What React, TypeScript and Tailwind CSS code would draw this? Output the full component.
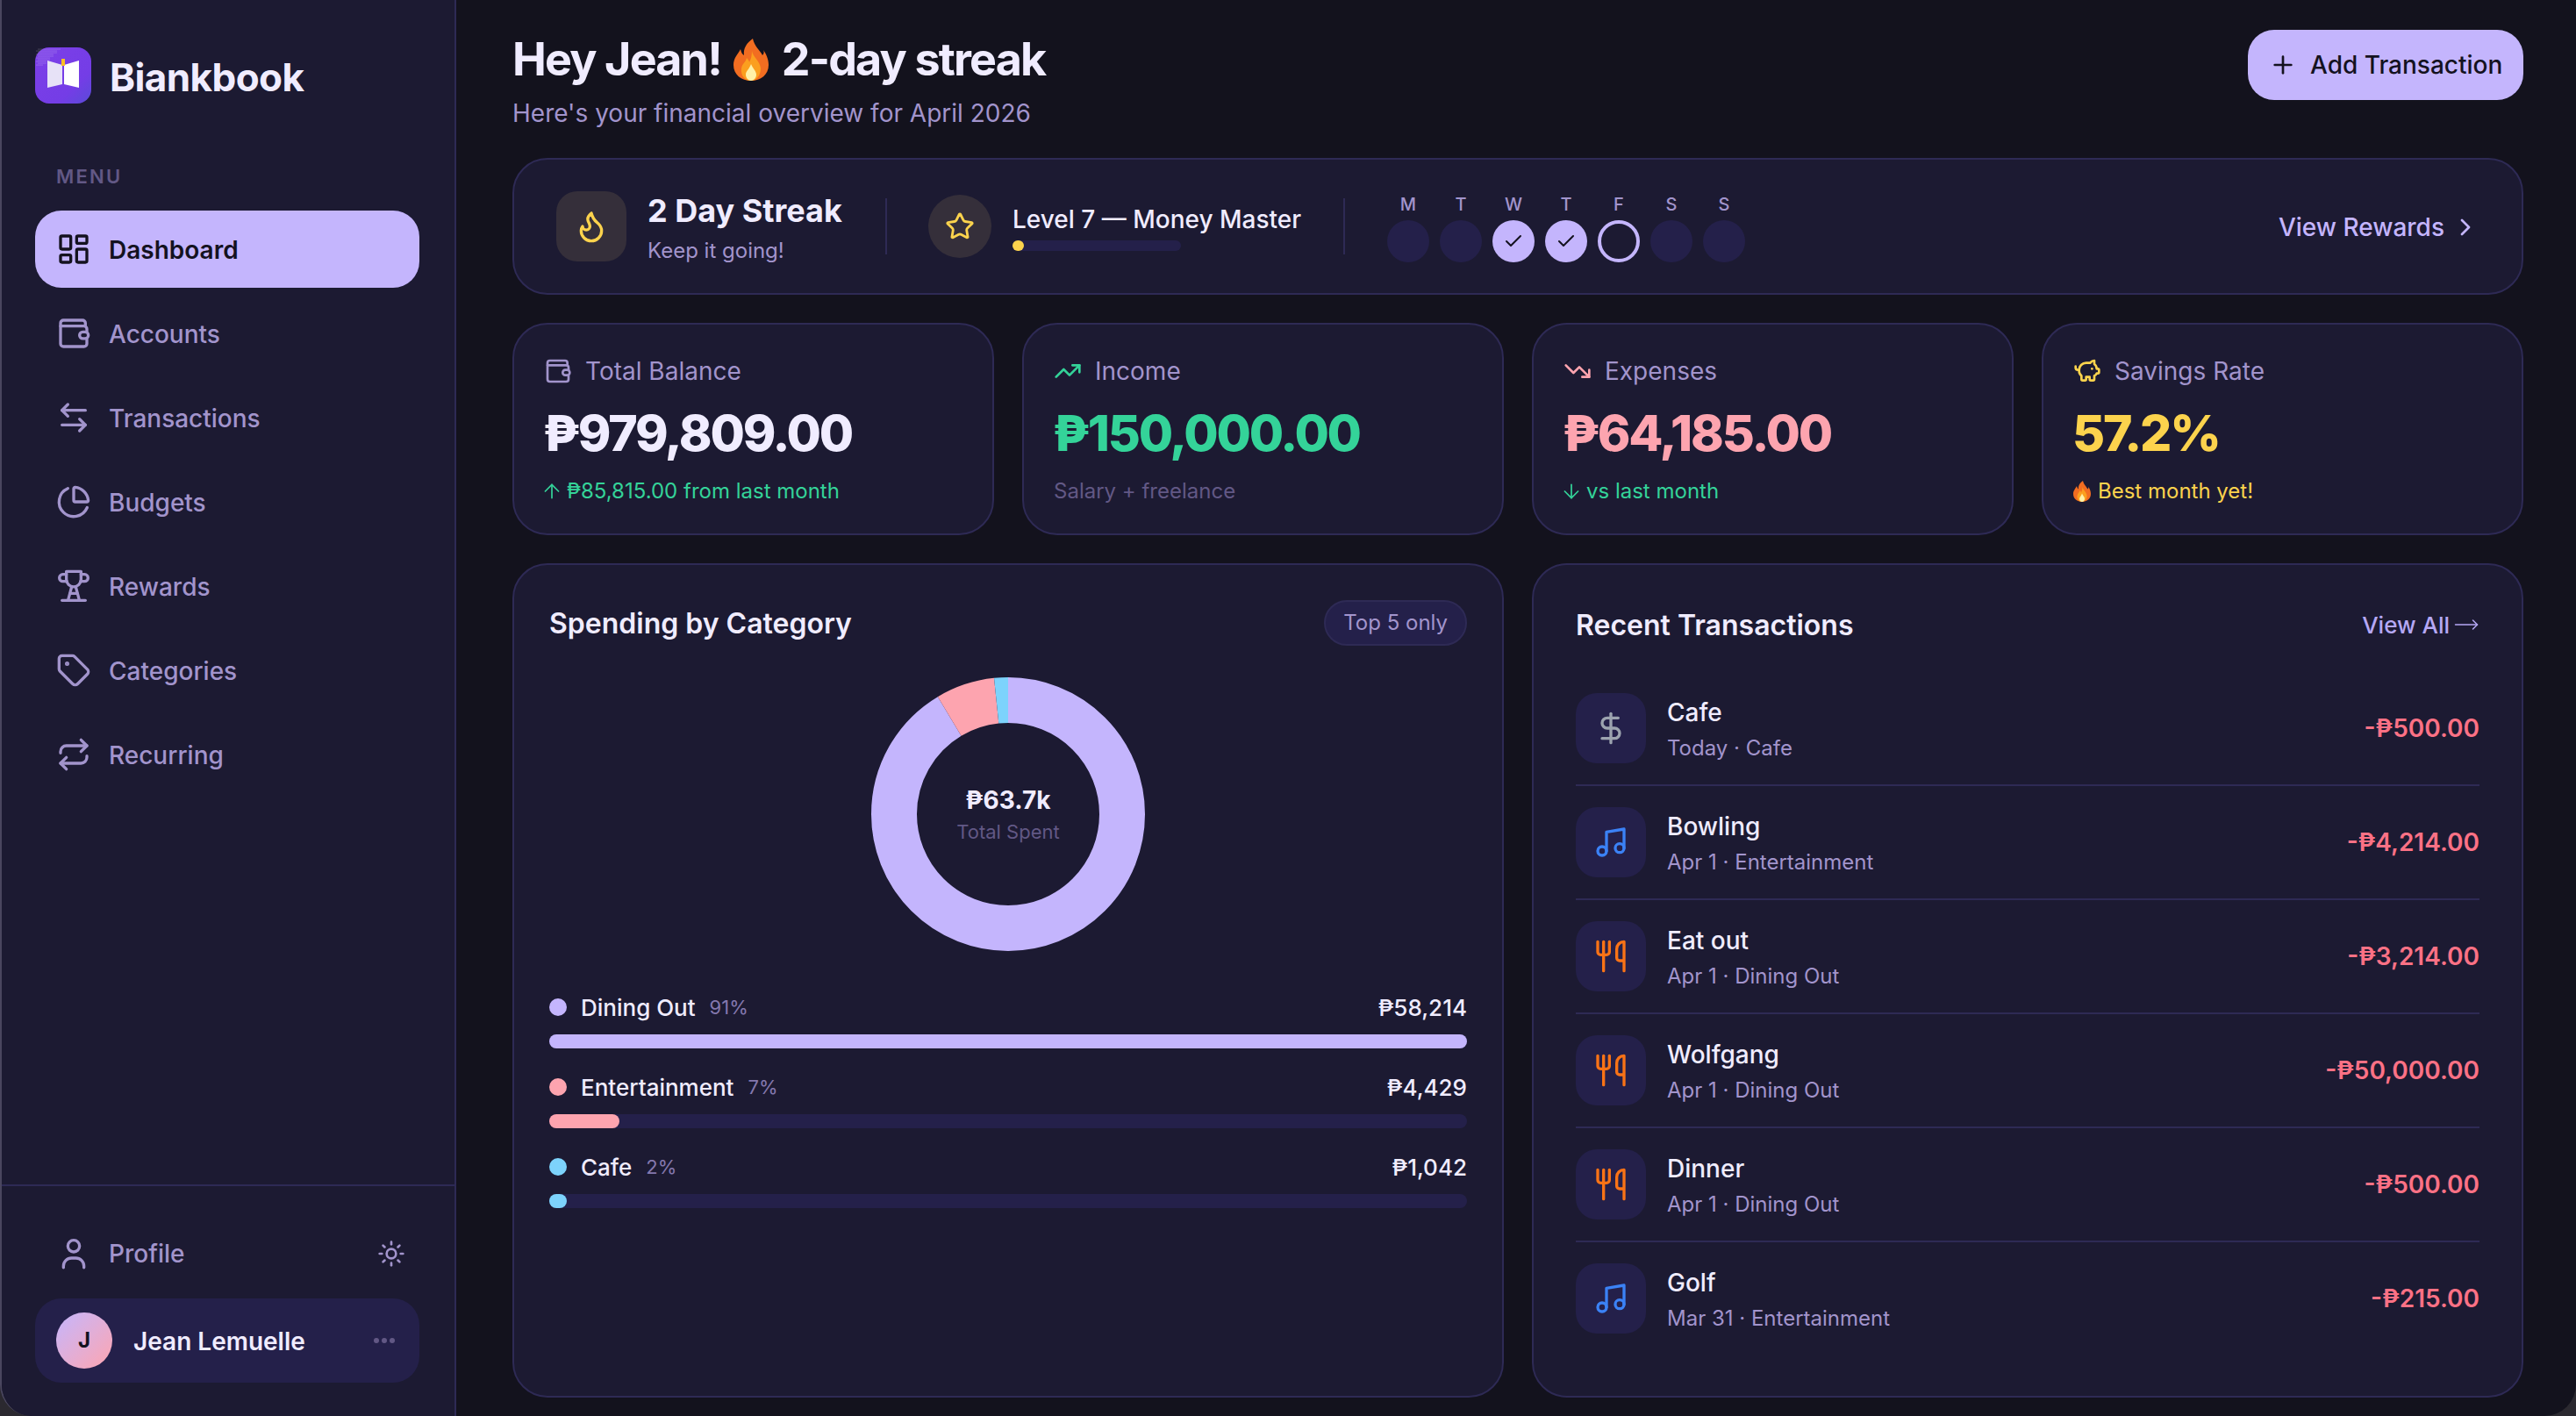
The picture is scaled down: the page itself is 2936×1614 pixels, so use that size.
import {
  ArrowDown,
  ArrowLeftRight,
  ArrowUp,
  Check,
  ChartPie,
  ChevronRight,
  DollarSign,
  Flame,
  LayoutDashboard,
  MoveRight,
  Music,
  PiggyBank,
  Plus,
  Repeat,
  Star,
  Sun,
  Tag,
  TrendingDown,
  TrendingUp,
  Utensils,
} from 'lucide-react'

type IconProps = { size?: number; className?: string; strokeWidth?: number }

function WalletIcon({ size = 40, className, strokeWidth = 2 }: IconProps) {
  return (
    <svg className={className} width={size} height={size} viewBox="0 0 24 24" fill="none" stroke="currentColor" strokeWidth={strokeWidth} strokeLinecap="round" strokeLinejoin="round">
      <path d="M20 7V5a2 2 0 0 0-2-2H5a2 2 0 0 0-2 2v14a2 2 0 0 0 2 2h14a2 2 0 0 0 2-2v-3" />
      <path d="M3 7h16a2 2 0 0 1 2 2v2" />
      <rect x="16" y="11" width="6" height="4.5" rx="2.2" />
    </svg>
  )
}

function TrophyIcon({ size = 40, className, strokeWidth = 2 }: IconProps) {
  return (
    <svg className={className} width={size} height={size} viewBox="0 0 24 24" fill="none" stroke="currentColor" strokeWidth={strokeWidth} strokeLinecap="round" strokeLinejoin="round">
      <path d="M7 2h10v5.500a5 5 0 0 1-10 0z" />
      <path d="M7 4H4.600a2.300 2.300 0 0 0 0 4.800H7.300" />
      <path d="M17 4h2.400a2.300 2.300 0 0 1 0 4.800h-2.700" />
      <path d="M10.600 12.500 8.200 21.500" />
      <path d="M13.400 12.500l2.400 9" />
      <path d="M9.600 17h4.800" />
      <path d="M4 21.800h16" />
    </svg>
  )
}

function UserIcon({ size = 40, className, strokeWidth = 2 }: IconProps) {
  return (
    <svg className={className} width={size} height={size} viewBox="0 0 24 24" fill="none" stroke="currentColor" strokeWidth={strokeWidth} strokeLinecap="round" strokeLinejoin="round">
      <circle cx="12" cy="6.800" r="4" />
      <path d="M5 21.500v-1a5.500 5.500 0 0 1 5.500-5.500h3a5.500 5.500 0 0 1 5.500 5.500v1" />
    </svg>
  )
}

function FireEmoji({ className }: { className: string }) {
  return (
    <svg className={className} viewBox="0 0 40 48">
      <path fill="#f26d21" d="M22 0C24 9 30 13 33 19C35 17 35 15 34 13C39 20 40 26 40 30C40 41 31 48 20 48C9 48 0 41 0 30C0 22 5 18 8 12C9 16 10 18 12 19C11 11 15 5 22 0Z" />
      <path fill="#fb9f1f" d="M21 14C22 21 30 25 31 34C31 42 26 48 20 48C13 48 8 42 9 34C10 28 14 27 15 22C17 24 18 26 18 27C20 23 21 19 21 14Z" />
      <path fill="#fff1a8" d="M20 29C22 34 26 37 26 41C26 45 23 48 20 48C17 48 14 45 14 41C14 37 18 35 20 29Z" />
    </svg>
  )
}

const logoDots: [number, number][] = []
for (let y = 2; y < 22; y += 2) {
  for (let x = 2; x < 30 - y; x += 2) logoDots.push([x + (y % 4), y])
}

function Logo() {
  return (
    <svg className="shrink-0" width="64" height="64" viewBox="0 0 64 64">
      <defs>
        <linearGradient id="logoBg" x1="0" y1="0" x2="1" y2="1">
          <stop offset="0" stopColor="#7d3fe8" />
          <stop offset="0.7" stopColor="#743de6" />
          <stop offset="1" stopColor="#5a4bd8" />
        </linearGradient>
      </defs>
      <rect width="64" height="64" rx="16" fill="url(#logoBg)" />
      {logoDots.map(([x, y]) => (
        <circle key={`${x}-${y}`} cx={x} cy={y} r="0.5" fill="#ffffff" opacity="0.5" />
      ))}
      <path fill="#e7e2f7" d="M14 15L31 20V42L14 46Z" />
      <path fill="#ffffff" d="M33 20L50 15V46L33 42Z" />
      <rect x="30" y="13" width="4" height="8" fill="#fbbf24" />
    </svg>
  )
}

const navItems = [
  { label: 'Dashboard', icon: LayoutDashboard, active: true },
  { label: 'Accounts', icon: WalletIcon },
  { label: 'Transactions', icon: ArrowLeftRight },
  { label: 'Budgets', icon: ChartPie },
  { label: 'Rewards', icon: TrophyIcon },
  { label: 'Categories', icon: Tag },
  { label: 'Recurring', icon: Repeat },
]

function Sidebar() {
  return (
    <aside className="flex w-[518px] shrink-0 flex-col border-r-2 border-[#2e2a55] bg-[#1c1a32]">
      <div className="flex items-center gap-[21px] pl-[38px] pt-[54px]">
        <Logo />
        <span className="translate-y-[2px] text-[44px] font-bold leading-[64px] tracking-[-0.6px] text-[#f0ecff]">Biankbook</span>
      </div>
      <p className="mt-[68px] pl-[62px] text-[22px] font-semibold leading-[30px] tracking-[2.2px] text-[#625885]">MENU</p>
      <nav className="mt-[24px] flex flex-col gap-[8px] pl-[38px] pr-[40px]">
        {navItems.map((item) => {
          const Icon = item.icon
          return (
            <div
              key={item.label}
              className={
                item.active
                  ? 'flex h-[88px] items-center gap-[20px] rounded-[30px] bg-[#c4b5fd] pl-[24px] text-[#14121f]'
                  : 'flex h-[88px] items-center gap-[20px] rounded-[30px] pl-[24px] text-[#a294cc]'
              }
            >
              <Icon size={40} strokeWidth={2} />
              <span className={item.active ? 'pt-[2px] text-[28px] font-semibold' : 'pt-[2px] text-[28px] font-medium'}>{item.label}</span>
            </div>
          )
        })}
      </nav>
      <div className="mt-auto border-t-2 border-[#2e2a55] pb-[38px] pl-[38px] pr-[40px] pt-[33px]">
        <div className="flex h-[88px] items-center gap-[20px] pl-[24px] pr-[16px] text-[#a294cc]">
          <UserIcon size={40} />
          <span className="text-[28px] font-medium">Profile</span>
          <Sun className="ml-auto" size={32} strokeWidth={2} />
        </div>
        <div className="mt-[7px] flex h-[96px] items-center rounded-[30px] bg-[#24204a] pl-[24px] pr-[28px]">
          <div className="flex h-[64px] w-[64px] items-center justify-center rounded-full bg-gradient-to-br from-[#c4b5fd] to-[#fda4af] text-[24px] font-bold text-[#14121f]">J</div>
          <span className="ml-[24px] pt-[2px] text-[28px] font-semibold text-[#f0ecff]">Jean Lemuelle</span>
          <div className="ml-auto flex gap-[3px]">
            <span className="h-[6px] w-[6px] rounded-full bg-[#625885]" />
            <span className="h-[6px] w-[6px] rounded-full bg-[#625885]" />
            <span className="h-[6px] w-[6px] rounded-full bg-[#625885]" />
          </div>
        </div>
      </div>
    </aside>
  )
}

function StreakBanner() {
  const days = [
    { d: 'M', state: 'off' },
    { d: 'T', state: 'off' },
    { d: 'W', state: 'done' },
    { d: 'T', state: 'done' },
    { d: 'F', state: 'today' },
    { d: 'S', state: 'off' },
    { d: 'S', state: 'off' },
  ]
  return (
    <section className="flex h-[156px] items-center rounded-[40px] border-2 border-[#2e2a55] bg-[#1c1a32] pl-[48px] pr-[48px]">
      <div className="flex h-[80px] w-[80px] items-center justify-center rounded-[24px] bg-[#352f3a] text-[#fcd34d]">
        <Flame size={40} strokeWidth={2} />
      </div>
      <div className="ml-[24px] w-[222px] pt-[4px]">
        <p className="text-[36px] font-bold leading-[44px] text-[#f0ecff]">2 Day Streak</p>
        <p className="mt-[8px] text-[24px] leading-[32px] text-[#a294cc]">Keep it going!</p>
      </div>
      <div className="ml-[49px] h-[64px] w-[2px] bg-[#2e2a55]" />
      <div className="ml-[47px] flex h-[72px] w-[72px] items-center justify-center rounded-full bg-[#352f3a] text-[#fcd34d]">
        <Star size={34} strokeWidth={2} />
      </div>
      <div className="ml-[24px] w-[328px] pt-[2px]">
        <p className="whitespace-nowrap text-[28px] font-medium leading-[36px] text-[#f0ecff]">Level 7 — Money Master</p>
        <div className="mt-[6px] h-[12px] w-[192px] rounded-full bg-[#24204a]">
          <div className="h-[12px] w-[13px] rounded-full bg-[#fcd34d]" />
        </div>
      </div>
      <div className="ml-[49px] h-[64px] w-[2px] bg-[#2e2a55]" />
      <div className="ml-[48px] flex gap-[12px] pt-[4px]">
        {days.map((day, i) => (
          <div key={i} className="flex w-[48px] flex-col items-center gap-[6px]">
            <span className="text-[20px] font-medium leading-[24px] text-[#a294cc]">{day.d}</span>
            {day.state === 'off' && <div className="h-[48px] w-[48px] rounded-full bg-[#24204a]" />}
            {day.state === 'done' && (
              <div className="flex h-[48px] w-[48px] items-center justify-center rounded-full bg-[#c4b5fd] text-[#14121f]">
                <Check size={24} strokeWidth={2} />
              </div>
            )}
            {day.state === 'today' && <div className="h-[48px] w-[48px] rounded-full border-4 border-[#c4b5fd]" />}
          </div>
        ))}
      </div>
      <div className="ml-auto flex items-center gap-[8px] pt-[2px] text-[#c4b5fd]">
        <span className="text-[28px] font-medium">View Rewards</span>
        <ChevronRight size={32} strokeWidth={2} />
      </div>
    </section>
  )
}

function StatCard({
  icon,
  label,
  value,
  valueClass,
  children,
}: {
  icon: React.ReactNode
  label: string
  value: string
  valueClass: string
  children: React.ReactNode
}) {
  return (
    <div className="flex h-[242px] flex-col rounded-[40px] border-2 border-[#2e2a55] bg-[#1c1a32] px-[34px] pt-[33px]">
      <div className="flex h-[40px] items-center gap-[15px]">
        {icon}
        <span className="text-[28px] text-[#a294cc]">{label}</span>
      </div>
      <p className={`-ml-[1px] mt-[17px] text-[57px] font-extrabold leading-[68px] tracking-[-2.2px] ${valueClass}`}>{value}</p>
      {children}
    </div>
  )
}

const legend = [
  { name: 'Dining Out', pct: '91%', amount: '₱58,214', dot: 'bg-[#c4b5fd]', fill: 'w-full bg-[#c4b5fd]' },
  { name: 'Entertainment', pct: '7%', amount: '₱4,429', dot: 'bg-[#fda4af]', fill: 'w-[80px] bg-[#fda4af]' },
  { name: 'Cafe', pct: '2%', amount: '₱1,042', dot: 'bg-[#7dd3fc]', fill: 'w-[20px] bg-[#7dd3fc]' },
]

function SpendingCard() {
  return (
    <div className="flex flex-col rounded-[40px] border-2 border-[#2e2a55] bg-[#1c1a32] px-[40px] pt-[40px]">
      <div className="flex h-[52px] items-center justify-between">
        <h2 className="pt-[2px] text-[32px] font-semibold text-[#f0ecff]">Spending by Category</h2>
        <span className="flex h-[52px] items-center rounded-full border-2 border-[#2e2a55] bg-[#24204a] px-[20px] text-[24px] text-[#a294cc]">Top 5 only</span>
      </div>
      <div className="relative mx-auto mt-[36px] h-[312px] w-[312px]">
        <svg className="-rotate-90" width="312" height="312" viewBox="0 0 312 312" fill="none">
          <circle cx="156" cy="156" r="130" stroke="#c4b5fd" strokeWidth="52" pathLength="100" strokeDasharray="91.41 100" />
          <circle cx="156" cy="156" r="130" stroke="#fda4af" strokeWidth="52" pathLength="100" strokeDasharray="6.95 100" strokeDashoffset="-91.41" />
          <circle cx="156" cy="156" r="130" stroke="#7dd3fc" strokeWidth="52" pathLength="100" strokeDasharray="1.64 100" strokeDashoffset="-98.36" />
        </svg>
        <div className="absolute inset-0 flex flex-col items-center justify-center">
          <span className="text-[28px] font-bold leading-[40px] text-[#f0ecff]">₱63.7k</span>
          <span className="text-[22px] leading-[32px] text-[#625885]">Total Spent</span>
        </div>
      </div>
      <div className="mt-[46px] flex flex-col gap-[26px]">
        {legend.map((row) => (
          <div key={row.name}>
            <div className="flex h-[36px] items-center">
              <span className={`h-[20px] w-[20px] rounded-full ${row.dot}`} />
              <span className="ml-[16px] text-[26px] font-medium text-[#f0ecff]">{row.name}</span>
              <span className="ml-[16px] text-[22px] text-[#8478ae]">{row.pct}</span>
              <span className="ml-auto text-[26px] font-medium text-[#f0ecff]">{row.amount}</span>
            </div>
            <div className="mt-[13px] h-[16px] rounded-full bg-[#24204a]">
              <div className={`h-[16px] rounded-full ${row.fill}`} />
            </div>
          </div>
        ))}
      </div>
    </div>
  )
}

const transactions = [
  { name: 'Cafe', meta: 'Today · Cafe', amount: '-₱500.00', icon: DollarSign, color: 'text-[#9ca3af]' },
  { name: 'Bowling', meta: 'Apr 1 · Entertainment', amount: '-₱4,214.00', icon: Music, color: 'text-[#3b82f6]' },
  { name: 'Eat out', meta: 'Apr 1 · Dining Out', amount: '-₱3,214.00', icon: Utensils, color: 'text-[#f97316]' },
  { name: 'Wolfgang', meta: 'Apr 1 · Dining Out', amount: '-₱50,000.00', icon: Utensils, color: 'text-[#f97316]' },
  { name: 'Dinner', meta: 'Apr 1 · Dining Out', amount: '-₱500.00', icon: Utensils, color: 'text-[#f97316]' },
  { name: 'Golf', meta: 'Mar 31 · Entertainment', amount: '-₱215.00', icon: Music, color: 'text-[#3b82f6]' },
]

function TransactionsCard() {
  return (
    <div className="flex flex-col rounded-[40px] border-2 border-[#2e2a55] bg-[#1c1a32] px-[48px] pt-[46px]">
      <div className="mb-[32px] flex h-[44px] items-center justify-between">
        <h2 className="pt-[1px] text-[32px] font-semibold text-[#f0ecff]">Recent Transactions</h2>
        <span className="flex items-center gap-[4px] text-[26px] font-medium text-[#b5a8f5]">
          View All
          <MoveRight size={30} strokeWidth={1.2} />
        </span>
      </div>
      <div className="flex flex-col">
        {transactions.map((tx, i) => {
          const Icon = tx.icon
          return (
            <div key={tx.name} className={i < 5 ? 'flex items-center border-b-2 border-[#2e2a55] py-[24px]' : 'flex items-center py-[24px]'}>
              <div className={`flex h-[80px] w-[80px] items-center justify-center rounded-[24px] bg-[#24204a] ${tx.color}`}>
                <Icon size={40} strokeWidth={2} />
              </div>
              <div className="ml-[24px] pt-[2px]">
                <p className="text-[28px] font-medium leading-[38px] text-[#f0ecff]">{tx.name}</p>
                <p className="mt-[5px] text-[24px] leading-[34px] text-[#a294cc]">{tx.meta}</p>
              </div>
              <span className="ml-auto text-[28px] font-semibold text-[#fb7185]">{tx.amount}</span>
            </div>
          )
        })}
      </div>
    </div>
  )
}

export default function App() {
  return (
    <div className="h-screen w-screen overflow-hidden bg-[#2b2930] font-['Inter',sans-serif]">
      <div className="flex h-full overflow-hidden rounded-b-[36px] border-l-2 border-[#4a465f] bg-[#13121d]">
        <Sidebar />
        <main className="flex min-w-0 flex-1 flex-col pb-[21px] pl-[64px] pr-[60px] pt-[34px]">
          <header className="mb-[32px] flex items-start justify-between">
            <div>
              <h1 className="text-[52px] font-bold leading-[68px] tracking-[-1.85px] text-[#f0ecff]">
                Hey Jean! <FireEmoji className="mx-[4px] inline-block h-[48px] w-[40px] align-[-6px]" /> 2-day streak
              </h1>
              <p className="mt-[8px] text-[28px] leading-[38px] text-[#a294cc]">Here's your financial overview for April 2026</p>
            </div>
            <button className="flex h-[80px] w-[314px] items-center gap-[15px] rounded-[30px] bg-[#c4b5fd] pl-[24px] text-[#14121f]">
              <Plus size={32} strokeWidth={2} />
              <span className="text-[28px] font-medium">Add Transaction</span>
            </button>
          </header>

          <StreakBanner />

          <div className="mt-[32px] grid grid-cols-4 gap-[32px]">
            <StatCard icon={<WalletIcon size={32} className="text-[#a294cc]" />} label="Total Balance" value="₱979,809.00" valueClass="text-[#f0ecff]">
              <p className="mt-[14px] flex items-center gap-[4px] text-[24px] leading-[36px] text-[#34d399]">
                <ArrowUp className="-ml-[4px]" size={26} strokeWidth={1.6} />₱85,815.00 from last month
              </p>
            </StatCard>
            <StatCard icon={<TrendingUp size={32} strokeWidth={2} className="text-[#34d399]" />} label="Income" value="₱150,000.00" valueClass="text-[#34d399]">
              <p className="mt-[14px] text-[24px] leading-[36px] text-[#625885]">Salary + freelance</p>
            </StatCard>
            <StatCard icon={<TrendingDown size={32} strokeWidth={2} className="text-[#fda4af]" />} label="Expenses" value="₱64,185.00" valueClass="text-[#fda4af]">
              <p className="mt-[14px] flex items-center gap-[4px] text-[24px] leading-[36px] text-[#34d399]">
                <ArrowDown className="-ml-[4px]" size={26} strokeWidth={1.6} />vs last month
              </p>
            </StatCard>
            <StatCard icon={<PiggyBank size={32} strokeWidth={2} className="text-[#fcd34d]" />} label="Savings Rate" value="57.2%" valueClass="text-[#fcd34d]">
              <p className="mt-[14px] flex items-center gap-[8px] text-[24px] leading-[36px] text-[#fcd34d]">
                <FireEmoji className="h-[24px] w-[20px]" />Best month yet!
              </p>
            </StatCard>
          </div>

          <div className="mt-[32px] grid min-h-0 flex-1 grid-cols-2 gap-[32px]">
            <SpendingCard />
            <TransactionsCard />
          </div>
        </main>
      </div>
    </div>
  )
}
